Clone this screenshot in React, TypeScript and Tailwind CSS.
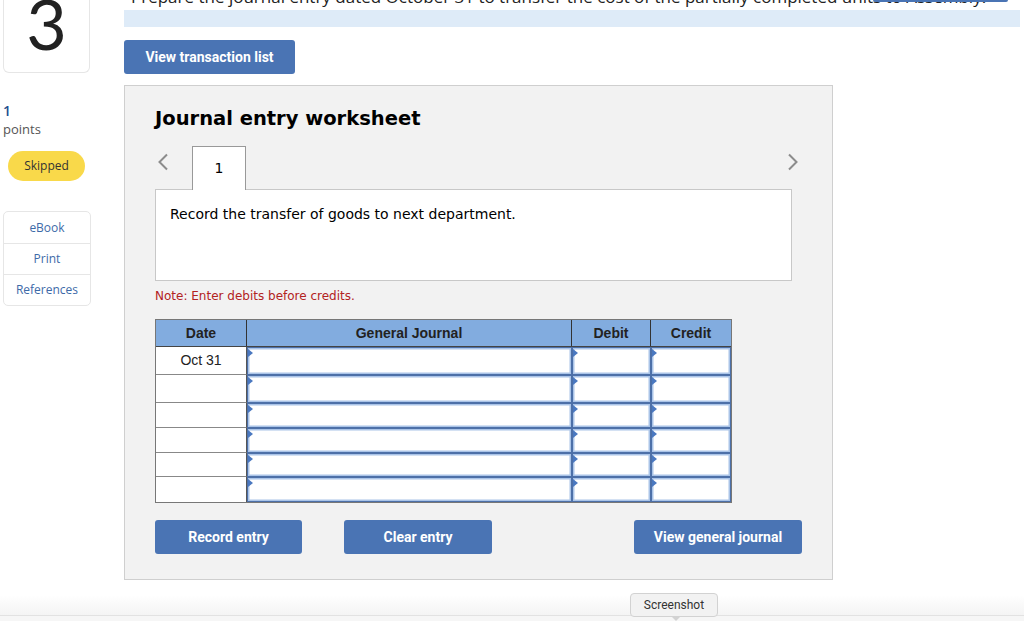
import React from "react";

const rows = ["Oct 31", "", "", "", "", ""];
const rowHeights = ["h-[28px]", "h-[28px]", "h-[25px]", "h-[25px]", "h-[24px]", "h-[25px]"];

function InputCell() {
  return (
    <div className="relative h-full border border-[#4d70a8] bg-white shadow-[inset_0_0_0_1.5px_#aac4e8]">
      <span className="absolute left-0 top-[1px] h-0 w-0 border-y-[4px] border-l-[5px] border-y-transparent border-l-[#4a78c0]" />
    </div>
  );
}

function Chevron({ dir }: { dir: "left" | "right" }) {
  return (
    <svg width="12" height="18" viewBox="0 0 12 18" fill="none">
      <path
        d={dir === "left" ? "M10 1.5 L2.5 9 L10 16.5" : "M2 1.5 L9.5 9 L2 16.5"}
        stroke="#8c8c8c"
        strokeWidth="2"
      />
    </svg>
  );
}

function BlueButton({ label, w }: { label: string; w: string }) {
  return (
    <button
      className={`${w} h-[34px] rounded-[3px] bg-[#4a74b4] text-[14px] font-bold text-white`}
      style={{ fontFamily: "Roboto, 'Liberation Sans', sans-serif" }}
    >
      {label}
    </button>
  );
}

export default function App() {
  return (
    <div
      className="relative flex h-[621px] w-[1024px] flex-col overflow-hidden bg-white"
      style={{ fontFamily: "'Open Sans', 'Liberation Sans', sans-serif" }}
    >
      <div className="flex h-[595px]">
        {/* left column */}
        <aside className="w-[124px] shrink-0 pl-[3px]">
          <div className="relative h-[73px] w-[87px] overflow-hidden rounded-b-[6px] border border-t-0 border-[#e6e6e6]">
            <span
              className="absolute left-0 right-0 top-[-12px] text-center text-[70px] leading-[70px] text-[#222]"
              style={{ fontFamily: "Lato, sans-serif" }}
            >
              3
            </span>
          </div>
          <div className="mt-[29px] text-[14px] font-semibold leading-[18px] text-[#1f4f8f]">1</div>
          <div className="text-[13px] leading-[18px] text-[#555]">points</div>
          <div className="ml-[5px] mt-[13px] flex h-[30px] w-[77px] items-center justify-center rounded-full bg-[#f9d94a] text-[12px] text-[#333]">
            Skipped
          </div>
          <div className="mt-[30px] w-[88px] rounded-[5px] border border-[#e6e6e6] text-center text-[12px] text-[#3d6aa8]">
            <div className="flex h-[32px] items-center justify-center border-b border-[#e6e6e6]">eBook</div>
            <div className="flex h-[31px] items-center justify-center border-b border-[#e6e6e6]">Print</div>
            <div className="flex h-[30px] items-center justify-center">References</div>
          </div>
        </aside>

        {/* main column */}
        <main className="flex-1">
          <div className="relative mr-[4px] h-[27px]">
            <div className="absolute bottom-0 left-0 right-0 h-[17px] bg-[#deebf8]" />
            <div
              className="absolute left-[7px] top-[-13px] whitespace-nowrap text-[17px] leading-[20px] text-[#222]"
              style={{ fontFamily: "'Open Sans', sans-serif" }}
            >
              Prepare the journal entry dated October 31 to transfer the cost of the partially completed units to Assembly.
            </div>
            <div className="absolute left-[749px] top-0 h-[2px] w-[135px] rounded-b-[3px] bg-[#4a74b4]" />
          </div>

          <div className="mt-[13px]">
            <BlueButton label="View transaction list" w="w-[171px]" />
          </div>

          {/* worksheet panel */}
          <section
            className="mt-[11px] h-[495px] w-[709px] border border-[#cfcfcf] bg-[#f2f2f2] pl-[30px] pt-[20px]"
            style={{ fontFamily: "Verdana, 'DejaVu Sans', sans-serif" }}
          >
            <h1 className="text-[19.5px] font-bold leading-[26px] text-black">Journal entry worksheet</h1>

            <div className="mt-[14px] flex w-[645px] items-end justify-between">
              <div className="flex items-end">
                <span className="mb-[18px] ml-[2px] w-[35px]">
                  <Chevron dir="left" />
                </span>
                <div className="relative z-10 -mb-px flex h-[44px] w-[54px] items-center justify-center border border-b-0 border-[#999] bg-white text-[14px] text-black">
                  1
                </div>
              </div>
              <span className="mb-[18px] mr-[1px]">
                <Chevron dir="right" />
              </span>
            </div>

            <div className="h-[92px] w-[637px] border border-[#c8c8c8] bg-white pl-[14px] pt-[15px] text-[14px] leading-[18px] text-black">
              Record the transfer of goods to next department.
            </div>

            <p className="mt-[7px] text-[12px] leading-[16px] text-[#b22222]">Note: Enter debits before credits.</p>

            {/* table */}
            <div
              className="mt-[15px] w-[577px] border border-[#777]"
              style={{ fontFamily: "Arial, 'Liberation Sans', sans-serif" }}
            >
              <div className="grid h-[27px] grid-cols-[91px_325px_79px_80px] border-b border-[#444] bg-[#82acdf] text-[14px] font-bold text-[#222]">
                <div className="flex items-center justify-center border-r border-[#333]">Date</div>
                <div className="flex items-center justify-center border-r border-[#333]">General Journal</div>
                <div className="flex items-center justify-center border-r border-[#333]">Debit</div>
                <div className="flex items-center justify-center">Credit</div>
              </div>
              {rows.map((d, i) => (
                <div key={i} className={`grid ${rowHeights[i]} grid-cols-[91px_325px_79px_80px] bg-white`}>
                  <div
                    className={`flex items-center justify-center border-r border-[#555] text-[14px] text-[#222] ${
                      i < rows.length - 1 ? "border-b border-b-[#888]" : ""
                    }`}
                  >
                    {d}
                  </div>
                  <InputCell />
                  <InputCell />
                  <InputCell />
                </div>
              ))}
            </div>

            <div className="mt-[17px] flex w-[647px]">
              <BlueButton label="Record entry" w="w-[147px]" />
              <div className="ml-[42px]">
                <BlueButton label="Clear entry" w="w-[148px]" />
              </div>
              <div className="ml-auto">
                <BlueButton label="View general journal" w="w-[168px]" />
              </div>
            </div>
          </section>
        </main>
      </div>

      {/* bottom strip */}
      <div className="h-[20px] bg-gradient-to-b from-white to-[#f4f4f4]" />
      <div className="h-[6px] border-t border-[#e2e2e2] bg-[#f6f6f6]" />

      {/* screenshot tooltip */}
      <div
        className="absolute left-[630px] top-[593px] flex h-[24px] w-[88px] items-center justify-center rounded-[4px] border border-[#d2d2d2] bg-[#f2f2f2] text-[12px] text-[#333]"
        style={{ fontFamily: "Roboto, sans-serif" }}
      >
        Screenshot
        <span className="absolute bottom-[-5px] left-[40px] h-0 w-0 border-x-[5px] border-t-[5px] border-x-transparent border-t-[#d2d2d2]" />
      </div>
    </div>
  );
}
